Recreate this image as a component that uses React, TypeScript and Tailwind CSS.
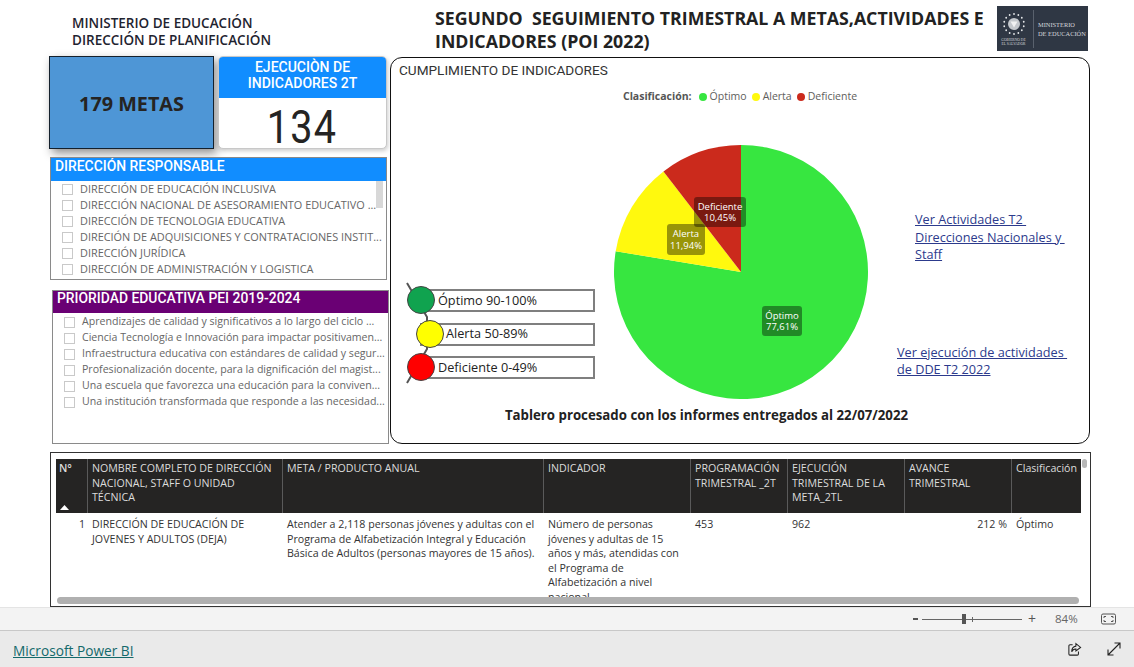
const F = "font-['Open_Sans','Noto_Sans',sans-serif]";

function slice(from: number, to: number) {
  const cx = 127, cy = 127, r = 127;
  const p = (v: number) => {
    const a = v * 2 * Math.PI;
    return `${cx + r * Math.sin(a)} ${cy - r * Math.cos(a)}`;
  };
  return `M${cx} ${cy}L${p(from)}A${r} ${r} 0 ${to - from > 0.5 ? 1 : 0} 1 ${p(to)}Z`;
}

function Check({ children }: { children: string }) {
  return (
    <div className="flex items-center h-4 whitespace-nowrap">
      <span className="w-[11px] h-[11px] border border-[#c9c9c9] bg-white shrink-0 mr-[7px]" />
      <span>{children}</span>
    </div>
  );
}

function Light({ color, text, offset, pad }: { color: string; text: string; offset: string; pad: string }) {
  return (
    <div className={`relative h-[23px] w-[175px] border-2 border-[#7f7f7f] bg-white flex items-center ${pad} text-[12.7px] text-[#222] ml-[15px]`}>
      <span className={`absolute ${offset} top-[-5px] w-[28px] h-[28px] rounded-full border border-[#444]`} style={{ background: color }} />
      <span className="relative">{text}</span>
    </div>
  );
}

function Tip({ a, b, cls }: { a: string; b: string; cls: string }) {
  return (
    <div className={`absolute ${cls} rounded-[3px] bg-black/40 text-white text-[9.5px] leading-[11.5px] flex flex-col items-center justify-center`}>
      <span>{a}</span>
      <span>{b}</span>
    </div>
  );
}

function Lines({ items, cls = "" }: { items: string[]; cls?: string }) {
  return (
    <div className={`px-[4px] leading-[14.5px] ${cls}`}>
      {items.map((t) => (
        <div key={t} className="whitespace-nowrap">{t}</div>
      ))}
    </div>
  );
}

const cols = "grid grid-cols-[31px_195px_261px_147px_97px_117px_107px_70px]";
const head = [
  ["NOMBRE COMPLETO DE DIRECCIÓN", "NACIONAL, STAFF O UNIDAD", "TÉCNICA"],
  ["META / PRODUCTO ANUAL"],
  ["INDICADOR"],
  ["PROGRAMACIÓN", "TRIMESTRAL _2T"],
  ["EJECUCIÓN", "TRIMESTRAL DE LA", "META_2TL"],
  ["AVANCE", "TRIMESTRAL"],
  ["Clasificación"],
];

const body = [
  ["DIRECCIÓN DE EDUCACIÓN DE", "JOVENES Y ADULTOS (DEJA)"],
  ["Atender a 2,118 personas jóvenes y adultas con el", "Programa de Alfabetización Integral y Educación", "Básica de Adultos (personas mayores de 15 años)."],
  ["Número de personas", "jóvenes y adultas de 15", "años y más, atendidas con", "el Programa de", "Alfabetización a nivel", "nacional"],
  ["453"],
  ["962"],
];

export default function App() {
  return (
    <div className={`w-[1134px] h-[667px] overflow-hidden bg-white flex flex-col ${F}`}>
      <div className="h-[607px] shrink-0 flex flex-col">
        <div className="h-[56px] flex shrink-0">
          <div className="w-[435px] pl-[72px] pt-[15px] text-[13.5px] leading-[17px] font-semibold text-[#1f2430]">
            <div>MINISTERIO DE EDUCACIÓN</div>
            <div>DIRECCIÓN DE PLANIFICACIÓN</div>
          </div>
          <div className="w-[562px] pt-[7px] text-[17.75px] leading-[23px] font-bold text-[#222] whitespace-pre">
            <div>SEGUNDO  SEGUIMIENTO TRIMESTRAL A METAS,ACTIVIDADES E</div>
            <div>INDICADORES (POI 2022)</div>
          </div>
          <div className="mt-[6px] w-[91px] h-[45px] bg-[#2f3744] flex items-center text-[#d5d8dc] font-['Liberation_Serif',serif]">
            <div className="w-[33px] h-full flex flex-col items-center pt-[6px]">
              <svg width="24" height="24" viewBox="0 0 24 24">
                <circle cx="12" cy="12" r="6" fill="#c4c8cd" />
                <path d="M8.5 9.5h7l-3.5 6z" fill="#f0f1f2" />
                {Array.from({ length: 14 }, (_, i) => (
                  <circle key={i} cx={12 + 10 * Math.sin((i * Math.PI) / 7)} cy={12 - 10 * Math.cos((i * Math.PI) / 7)} r="0.9" fill="#e6e8ea" />
                ))}
              </svg>
              <div className="text-[3.6px] leading-[4px] text-center whitespace-nowrap mt-[2px]">
                GOBIERNO DE<br />EL SALVADOR
              </div>
            </div>
            <div className="w-px h-[38px] bg-[#59616d] ml-[3px]" />
            <div className="text-[6.4px] leading-[9px] pl-[4px] whitespace-nowrap">
              MINISTERIO<br />DE EDUCACIÓN
            </div>
          </div>
        </div>

        <div className="h-[387px] flex shrink-0">
          <div className="w-[390px] pl-[49px] shrink-0">
            <div className="flex gap-[4px] h-[93px]">
              <div className="w-[165px] h-[93px] pt-[3px] bg-[#4e96d6] border border-[#14202c] shadow-[3px_4px_9px_rgba(0,0,0,0.45)] flex items-center justify-center text-[19.8px] font-bold text-[#252423]">
                179 METAS
              </div>
              <div className="w-[169px] h-[93px] rounded-[5px] border border-[#c8c8c8] bg-white shadow-[1px_2px_4px_rgba(0,0,0,0.2)] font-['Roboto',sans-serif]">
                <div className="h-[41px] rounded-t-[4px] bg-[#118dff] text-white text-center text-[14px] leading-[16px] font-medium pt-[2px]">
                  <div>EJECUCIÒN DE</div>
                  <div>INDICADORES 2T</div>
                </div>
                <div className="flex justify-center mt-[8px]">
                  <span className="text-[46px] leading-[42px] tracking-[1.5px] text-[#252423] scale-x-[0.86]">134</span>
                </div>
              </div>
            </div>

            <div className="mt-[8px] ml-[1px] w-[337px] h-[123px] border border-[#8a8a8a] relative overflow-hidden">
              <div className="h-[23px] bg-[#118dff] text-white font-['Roboto',sans-serif] font-medium text-[13.9px] leading-[16px] pl-[4px]">
                DIRECCIÓN RESPONSABLE
              </div>
              <div className="pl-[11px] text-[10.9px] text-[#666]">
                <Check>DIRECCIÓN DE EDUCACIÓN INCLUSIVA</Check>
                <Check>DIRECCIÓN NACIONAL DE ASESORAMIENTO EDUCATIVO ...</Check>
                <Check>DIRECCIÓN DE TECNOLOGIA EDUCATIVA</Check>
                <Check>DIRECIÓN DE ADQUISICIONES Y CONTRATACIONES INSTIT...</Check>
                <Check>DIRECCIÓN JURÍDICA</Check>
                <Check>DIRECCIÓN DE ADMINISTRACIÓN Y LOGISTICA</Check>
              </div>
              <div className="absolute left-[325px] top-[23px] w-[7px] h-[27px] bg-[#d8d8d8]" />
            </div>

            <div className="mt-[10px] ml-[3px] w-[337px] h-[154px] border border-[#8a8a8a] overflow-hidden">
              <div className="h-[22px] bg-[#6a0074] text-white font-['Roboto',sans-serif] font-medium text-[13.9px] leading-[14px] pl-[4px]">
                PRIORIDAD EDUCATIVA PEI 2019-2024
              </div>
              <div className="pl-[11px] pt-[1px] text-[10.6px] text-[#666]">
                <Check>Aprendizajes de calidad y significativos a lo largo del ciclo ...</Check>
                <Check>Ciencia Tecnología e Innovación para impactar positivamen...</Check>
                <Check>Infraestructura educativa con estándares de calidad y segur...</Check>
                <Check>Profesionalización docente, para la dignificación del magist...</Check>
                <Check>Una escuela que favorezca una educación para la conviven...</Check>
                <Check>Una institución transformada que responde a las necesidad...</Check>
              </div>
            </div>
          </div>

          <div className="w-[700px] h-[387px] mt-[1px] border border-[#111] rounded-[12px] flex flex-col">
            <div className="h-[24px] pl-[8px] pt-[4px] text-[13.6px] leading-[16px] text-[#333] font-['Roboto',sans-serif]">
              CUMPLIMIENTO DE INDICADORES
            </div>
            <div className="h-[30px] flex items-center justify-center gap-[3px] text-[10.5px] text-[#605e5c]">
              <b className="mr-[4px] text-[#555]">Clasificación:</b>
              <span className="w-[8px] h-[8px] rounded-full bg-[#37e640]" />
              <span className="mr-[2px]">Óptimo</span>
              <span className="w-[8px] h-[8px] rounded-full bg-[#fff90e]" />
              <span className="mr-[2px]">Alerta</span>
              <span className="w-[8px] h-[8px] rounded-full bg-[#cb2a1c]" />
              <span>Deficiente</span>
            </div>

            <div className="h-[254px] mt-[33px] flex shrink-0">
              <div className="w-[223px] shrink-0 pl-[14px] pt-[144px]">
                <div className="relative flex flex-col gap-[10.5px]">
                  <svg className="absolute left-0 top-[-8px]" width="40" height="104" viewBox="0 0 40 104">
                    <path d="M2 2L22 36 L22 68 L2 102" fill="none" stroke="#555" strokeWidth="2" />
                  </svg>
                  <Light color="#10a34f" text="Óptimo 90-100%" offset="left-[-15px]" pad="pl-[16px]" />
                  <Light color="#ffff00" text="Alerta 50-89%" offset="left-[-6px]" pad="pl-[24px]" />
                  <Light color="#ff0000" text="Deficiente 0-49%" offset="left-[-15px]" pad="pl-[16px]" />
                </div>
              </div>
              <div className="relative w-[254px] h-[254px] shrink-0">
                <svg width="254" height="254" viewBox="0 0 254 254">
                  <path d={slice(0, 0.7761)} fill="#37e640" />
                  <path d={slice(0.7761, 0.8955)} fill="#fff90e" />
                  <path d={slice(0.8955, 1)} fill="#cb2a1c" />
                </svg>
                <Tip a="Deficiente" b="10,45%" cls="left-[80px] top-[52px] w-[52px] h-[30px]" />
                <Tip a="Alerta" b="11,94%" cls="left-[53px] top-[79px] w-[38px] h-[31px]" />
                <Tip a="Óptimo" b="77,61%" cls="left-[148px] top-[161px] w-[40px] h-[30px]" />
              </div>
              <div className="flex-1 text-[12.7px] leading-[17.5px] text-[#2c3a8c] whitespace-pre relative">
                <div className="absolute left-[47px] top-[66px] underline">
                  <div>Ver Actividades T2 </div>
                  <div>Direcciones Nacionales y </div>
                  <div>Staff</div>
                </div>
                <div className="absolute left-[29px] top-[198.5px] underline">
                  <div>Ver ejecución de actividades </div>
                  <div>de DDE T2 2022</div>
                </div>
              </div>
            </div>

            <div className="text-center text-[13.25px] font-bold text-[#222] pr-[67px] mt-[6px] leading-[20px]">
              Tablero procesado con los informes entregados al 22/07/2022
            </div>
          </div>
        </div>

        <div className="mt-[9px] ml-[50px] w-[1041px] h-[155px] border border-[#333] relative overflow-hidden text-[10.65px] text-[#333]">
          <div className="ml-[5px] mt-[6px] w-[1025px]">
            <div className={`${cols} h-[54px] bg-[#252423] text-[#dcdcdc]`}>
              <div className="relative px-[3px] pt-[2px] font-semibold leading-[14.5px]">
                N°
                <svg className="absolute left-[4px] bottom-[3px]" width="9" height="5" viewBox="0 0 9 5"><path d="M0 5L4.5 0L9 5Z" fill="#fff" /></svg>
              </div>
              {head.map((h) => (
                <div key={h[0]} className="border-l border-[#5a5a5a] pt-[2px]">
                  <Lines items={h} />
                </div>
              ))}
            </div>
            <div className={`${cols} pt-[4px]`}>
              <div className="text-right pr-[2px] leading-[14.5px]">1</div>
              {body.map((b) => (
                <div key={b[0]} className="border-l border-transparent">
                  <Lines items={b} />
                </div>
              ))}
              <div className="border-l border-transparent">
                <Lines items={["212 %"]} cls="text-right" />
              </div>
              <div className="border-l border-transparent">
                <Lines items={["Óptimo"]} />
              </div>
            </div>
          </div>
          <div className="absolute left-[6px] top-[144px] w-[1022px] h-[7px] rounded-full bg-[#b0b0b0]" />
          <div className="absolute left-[1031px] top-[6px] w-[5px] h-[9px] rounded-full bg-[#b8b8b8]" />
          <div className="absolute left-[6px] top-[151px] w-[1022px] h-[4px] bg-white" />
        </div>
      </div>

      <div className="h-[24px] bg-[#f3f3f3] border-t border-[#e4e4e4] border-b border-b-[#c8c8c8] flex items-center shrink-0 text-[#666]">
        <span className="ml-[913px] w-[5px] h-[2px] bg-[#555]" />
        <div className="relative ml-[4px] w-[100px] h-px bg-[#666]">
          <span className="absolute left-[40px] top-[-5px] w-[4px] h-[10px] bg-[#555]" />
          <span className="absolute left-[50px] top-[-2px] w-px h-[5px] bg-[#666]" />
        </div>
        <span className="ml-[6px] text-[14px] leading-none text-[#555]">+</span>
        <span className="ml-[19px] text-[11.5px] text-[#666]">84%</span>
        <svg className="ml-[23px]" width="15" height="12" viewBox="0 0 15 12" fill="none" stroke="#555">
          <rect x="0.5" y="1" width="14" height="10" rx="1.5" />
          <path d="M3 5V3.5H5M10 3.5H12V5M12 7V8.5H10M5 8.5H3V7" />
        </svg>
      </div>

      <div className="flex-1 bg-[#eaeaea] flex items-center">
        <span className="ml-[13px] pt-[4px] text-[#13696b] underline text-[13.7px]">Microsoft Power BI</span>
        <svg className="ml-auto" width="15" height="15" viewBox="0 0 16 16" fill="none" stroke="#222" strokeWidth="1.1">
          <path d="M6 3H3.2C2.5 3 2 3.5 2 4.2V12.8C2 13.5 2.5 14 3.2 14H11C11.7 14 12.2 13.5 12.2 12.8V10" />
          <path d="M9.5 1.8L14.5 5.8L9.5 9.5V7.4C7.5 7.2 6 8.2 5 10.5C5 7.2 6.8 4.8 9.5 4.4Z" />
        </svg>
        <svg className="ml-[25px] mr-[13px]" width="14" height="14" viewBox="0 0 14 14" fill="none" stroke="#222" strokeWidth="1.1">
          <path d="M1 13L13 1M7.5 1H13V6.5M1 7.5V13H6.5" />
        </svg>
      </div>
    </div>
  );
}
